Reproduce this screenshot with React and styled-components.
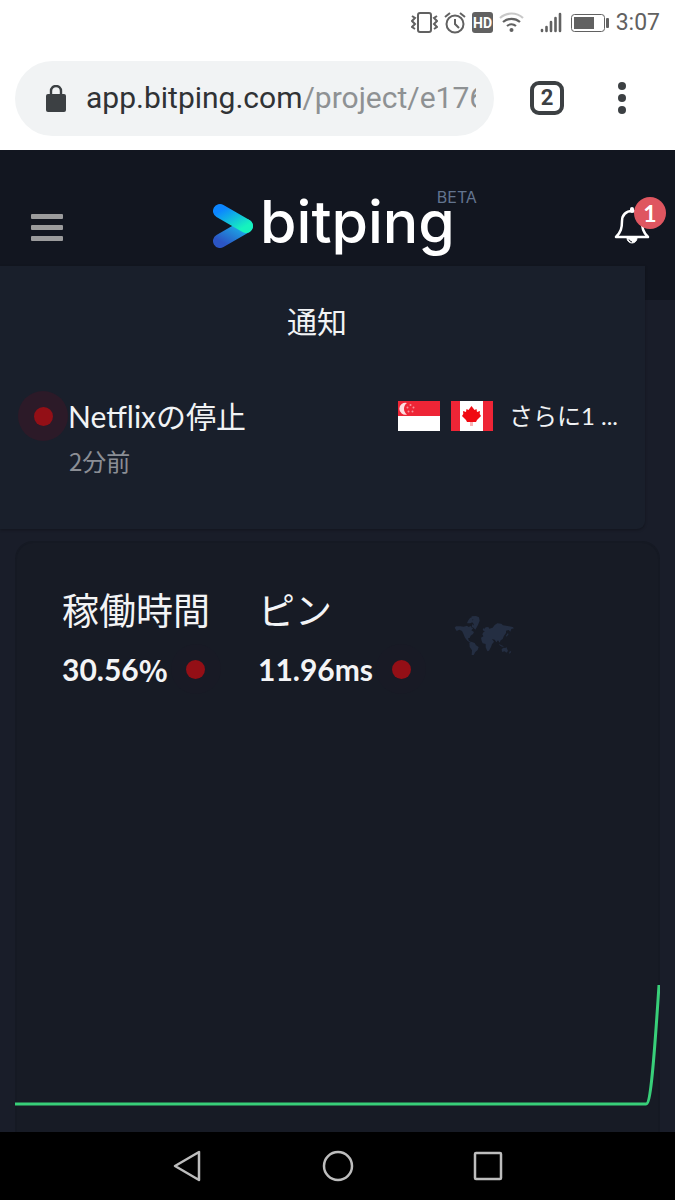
import React from "react";
import styled, { createGlobalStyle } from "styled-components";

const GlobalStyle = createGlobalStyle`
  *, *::before, *::after {
    box-sizing: border-box;
  }

  body {
    margin: 0;
    background: #171b25;
    font-family: Lato, "Noto Sans CJK JP", sans-serif;
  }

  h2, p {
    margin: 0;
    padding: 0;
    font-weight: 400;
  }

  svg {
    display: block;
    flex-shrink: 0;
  }

  button {
    border: 0;
    padding: 0;
    background: none;
    color: inherit;
    font: inherit;
    cursor: pointer;
  }
`;

const Screen = styled.div`
  display: flex;
  flex-direction: column;
  min-height: 100vh;
`;

const StatusBar = styled.div`
  display: flex;
  justify-content: flex-end;
  align-items: center;
  height: 46px;
  padding-right: 15px;
  background: #fff;
  color: #616161;
`;

const StatusIcons = styled.div`
  display: flex;
  align-items: center;
  gap: ${({ $gap }) => $gap}px;
  margin-right: ${({ $space }) => $space}px;
`;

const Clock = styled.time`
  font-family: Roboto, sans-serif;
  font-size: 23px;
  line-height: 24px;
`;

const BrowserBar = styled.div`
  display: flex;
  align-items: center;
  height: 104px;
  padding: 0 37px 0 15px;
  background: #fff;
  color: #3c4043;
`;

const AddressBox = styled.div`
  display: flex;
  flex: 1;
  align-items: center;
  gap: 20px;
  min-width: 0;
  height: 75px;
  padding: 0 18px 0 31px;
  border-radius: 38px;
  background: #f1f3f4;
`;

const Address = styled.span`
  flex: 1;
  min-width: 0;
  overflow: hidden;
  white-space: nowrap;
  color: #303235;
  font-family: Roboto, sans-serif;
  font-size: 30px;
  line-height: 40px;
`;

const AddressPath = styled.span`
  color: #8e9193;
`;

const TabsButton = styled.button`
  width: 34px;
  height: 34px;
  margin: 0 42px 0 36px;
  border: 4px solid #3c4043;
  border-radius: 9px;
  font-family: Roboto, sans-serif;
  font-size: 22px;
  font-weight: 700;
  line-height: 26px;
`;

const Header = styled.header`
  position: relative;
  display: flex;
  align-items: flex-start;
  height: 150px;
  padding: 0 9px 0 31px;
  background: #121620;
`;

const MenuButton = styled.button`
  display: flex;
  flex-direction: column;
  gap: 6px;
  width: 32px;
  margin-top: 64px;
`;

const MenuBar = styled.span`
  width: 100%;
  height: 5px;
  border-radius: 1px;
  background: #9b9b9c;
`;

const Logo = styled.a`
  position: relative;
  display: flex;
  align-items: flex-start;
  margin: 0 auto;
  padding-right: 10px;
  color: #fff;
  text-decoration: none;
`;

const LogoMark = styled.svg`
  margin: 53px 6px 0 0;
`;

const Wordmark = styled.span`
  margin-top: 36px;
  font-family: Inter, sans-serif;
  font-size: 59px;
  font-weight: 500;
  line-height: 72px;
`;

const Beta = styled.sup`
  position: absolute;
  top: 37px;
  right: -12px;
  color: #62748f;
  font-family: Inter, sans-serif;
  font-size: 16px;
  line-height: 20px;
`;

const BellButton = styled.button`
  position: relative;
  width: 52px;
  height: 50px;
  margin-top: 47px;
`;

const BellIcon = styled.svg`
  margin-top: 6px;
`;

const Badge = styled.span`
  position: absolute;
  top: 0;
  right: 0;
  width: 32px;
  height: 32px;
  border-radius: 50%;
  background: #df5660;
  color: #fff;
  font-size: 23px;
  font-weight: 700;
  line-height: 33px;
  text-align: center;
`;

const Notifications = styled.section`
  position: absolute;
  top: 116px;
  left: 0;
  right: 30px;
  z-index: 1;
  height: 263px;
  padding: 33px 27px 0 18px;
  border-radius: 0 0 8px 0;
  background: #191f2b;
  box-shadow: 0 1px 3px rgba(0, 0, 0, 0.3);
  color: #f1f3f5;
`;

const PanelTitle = styled.h2`
  padding-right: 2px;
  font-size: 30px;
  line-height: 44px;
  text-align: center;
`;

const Notice = styled.div`
  display: flex;
  align-items: flex-start;
  margin-top: 48px;
`;

const Halo = styled.span`
  display: grid;
  place-items: center;
  width: 50px;
  height: 50px;
  border-radius: 50%;
  background: ${({ $quiet }) => ($quiet ? "#181a25" : "#2c1a28")};

  &::before {
    content: "";
    width: 19px;
    height: 19px;
    border-radius: 50%;
    background: #930f16;
  }
`;

const NoticeText = styled.div`
  flex: 1;
`;

const NoticeTitle = styled.p`
  font-size: 30px;
  line-height: 50px;
`;

const NoticeTime = styled.p`
  padding-left: 1px;
  color: #8b8e95;
  font-family: "Noto Sans CJK JP", sans-serif;
  font-size: 24px;
  line-height: 40px;
`;

const Regions = styled.div`
  display: flex;
  align-items: center;
  gap: 11px;
  height: 50px;
`;

const More = styled.span`
  padding-left: 5px;
  font-size: 24px;
  line-height: 30px;
  white-space: nowrap;
`;

const Main = styled.main`
  display: flex;
  flex: 1;
  flex-direction: column;
  padding: 241px 15px 0;
  background: #191d29;
`;

const Card = styled.section`
  display: flex;
  flex: 1;
  flex-direction: column;
  border: 2px solid #151923;
  border-bottom: 0;
  border-radius: 18px 18px 0 0;
  background: #171b25;
`;

const Stats = styled.div`
  display: flex;
  align-items: flex-start;
  padding: 40px 45px 0;
  color: #f3f4f6;
`;

const Stat = styled.div`
  width: 196px;
`;

const StatLabel = styled.h2`
  font-size: 37px;
  line-height: 56px;
`;

const StatValue = styled.p`
  display: flex;
  align-items: center;
  height: 60px;
  font-size: 30px;
  font-weight: 700;

  ${Halo} {
    margin-left: 3px;
  }
`;

const Percent = styled.span`
  font-family: "Noto Sans CJK JP", sans-serif;
  line-height: 40px;
`;

const WorldMap = styled.svg`
  margin-top: 32px;
`;

const Chart = styled.svg`
  width: calc(100% + 4px);
  height: 150px;
  margin: auto -2px 0;
`;

const SystemNav = styled.nav`
  display: flex;
  justify-content: center;
  align-items: center;
  gap: 114px;
  height: 68px;
  background: #000;
`;

const stats = [
  { label: "稼働時間", value: "30.56", percent: true },
  { label: "ピン", value: "11.96ms" },
];

const VibrateIcon = () => (
  <svg width="27" height="22" viewBox="0 0 27 22" fill="none" stroke="currentColor" strokeWidth="2">
    <rect x="7" y="1" width="13" height="19" rx="2" />
    <path d="M1 4l3 2-3 3 3 3-3 3 3 2M26 4l-3 2 3 3-3 3 3 3-3 2" />
  </svg>
);

const AlarmIcon = () => (
  <svg width="22" height="22" viewBox="0 0 22 22" fill="none" stroke="currentColor" strokeWidth="2">
    <circle cx="11" cy="12" r="8.5" />
    <path d="M1 5l5-4M21 5l-5-4M11 7v5l4 4" />
  </svg>
);

const HdIcon = () => (
  <svg width="21" height="22" viewBox="0 0 21 22">
    <rect width="21" height="21" rx="3" fill="currentColor" />
    <text x="10.5" y="15.5" textAnchor="middle" fill="#fff" fontFamily="Roboto, sans-serif" fontSize="14" fontWeight="700">
      HD
    </text>
  </svg>
);

const WifiIcon = () => (
  <svg width="25" height="22" viewBox="0 0 25 22" fill="none" stroke="currentColor" strokeWidth="2.2">
    <path d="M1 6a17 17 0 0 1 23 0" opacity="0.35" />
    <path d="M4 10a13 13 0 0 1 17 0M8 14a7 7 0 0 1 9 0" />
    <circle cx="12.5" cy="18" r="2" fill="currentColor" stroke="none" />
  </svg>
);

const SignalIcon = () => (
  <svg width="22" height="22" viewBox="0 0 22 22" stroke="currentColor" strokeWidth="2.6" strokeLinecap="round">
    <path d="M2 18v1M6.5 15v4M11 10v9M15.5 6v13M20 2v17" />
  </svg>
);

const BatteryIcon = () => (
  <svg width="38" height="20" viewBox="0 0 38 20">
    <rect x="0.5" y="1.5" width="33" height="17" rx="3" fill="none" stroke="currentColor" />
    <rect x="3" y="4" width="20" height="12" fill="currentColor" />
    <rect x="35" y="5" width="3" height="10" rx="1" fill="currentColor" />
  </svg>
);

const LockIcon = () => (
  <svg width="20" height="27" viewBox="0 0 20 27">
    <rect y="9" width="20" height="18" rx="2" fill="currentColor" />
    <path d="M5 10V6a5 5 0 0 1 10 0v4" fill="none" stroke="currentColor" strokeWidth="2.4" />
  </svg>
);

const SingaporeFlag = () => (
  <svg width="42" height="30" viewBox="0 0 42 30" role="img" aria-label="シンガポール">
    <path fill="#fff" d="M0 0h42v30H0z" />
    <path fill="#ee2536" d="M0 0h42v15H0z" />
    <path fill="#fff" opacity="0.85" d="M9 2a6 6 0 1 0 0 11.5A7 7 0 0 1 9 2z" />
    <g fill="#fff" opacity="0.5">
      <circle cx="12.5" cy="4" r="1" />
      <circle cx="9.5" cy="6.5" r="1" />
      <circle cx="15.5" cy="6.5" r="1" />
      <circle cx="10.5" cy="10.5" r="1" />
      <circle cx="14.5" cy="10.5" r="1" />
    </g>
  </svg>
);

const CanadaFlag = () => (
  <svg width="42" height="30" viewBox="0 0 42 30" role="img" aria-label="カナダ">
    <path fill="#ee2536" d="M0 0h42v30H0z" />
    <path fill="#fff" d="M9 0h23v30H9z" />
    <path
      fill="#f00a12"
      d="M20.5 5l3 4 2-1 .5 3 3-1-.3 3 1.3 2-4 4-1 2h-9l-1-2-4-4 1.3-2-.3-3 3 1 .5-3 2 1z"
    />
    <path fill="#f00a12" opacity="0.3" d="M19 21h3v4h-3z" />
  </svg>
);

const Map = () => (
  <WorldMap width="62" height="40" viewBox="0 0 186 120" fill="#242e42" aria-hidden="true">
    <path d="M2 38l4-4 13 0 10 1 10-3 5 4 6-3 4 6 4 1-6 6 8 5-3 6-7 5-3 7-5 1 3 8 6 2-2 3-9-6-7-9-5-12-4-8-8-4-8 4z" />
    <path d="M39 25l3-8 6-8 8-4 4 5-6 5 3 6-8 4zM52 4l14-1 9 4 2 10-5 13-8 14-5-5 0-12-6-8 5-6zM55 27l5 6-2 6-5-4z" />
    <path d="M46 83l6-3 10 4 4 7 8 5-3 9-7 6-6 11-5-2 1-14-7-10z" />
    <path d="M81 68l7-4-3-6 3-6 4-2-4-5 7-8 8-1 3 5 10-3 6-8 8-5 12 1 5 5 14 2 15 3 4 4-8 2-3 8-5-5-8 2 0 7-6 8-4 10-6 4-3 7-5-7-5 6-5-8-8-2 6 8-6 8-3 8-6 11-5 2-5-12 0-10-9-2-3-7z" />
    <path d="M143 102l6-4 5 1 3-3 5 12-5 5-5-4-8 2zM136 87l6 4 8 3-6 1-8-5zM156 62l5-7 3 2-6 8zM168 108l4 2-5 6-2-2zM86 44l3-5 3 4-2 5z" />
  </WorldMap>
);

const App = () => (
  <>
    <GlobalStyle />
    <Screen>
      <StatusBar>
        <StatusIcons $gap={6} $space={16}>
          <VibrateIcon />
          <AlarmIcon />
          <HdIcon />
          <WifiIcon />
        </StatusIcons>
        <StatusIcons $gap={9} $space={7}>
          <SignalIcon />
          <BatteryIcon />
        </StatusIcons>
        <Clock>3:07</Clock>
      </StatusBar>

      <BrowserBar>
        <AddressBox>
          <LockIcon />
          <Address>
            app.bitping.com<AddressPath>/project/e176</AddressPath>
          </Address>
        </AddressBox>
        <TabsButton aria-label="タブ">2</TabsButton>
        <button aria-label="メニュー">
          <svg width="32" height="32" viewBox="0 0 32 32" fill="currentColor">
            <circle cx="16" cy="4" r="4" />
            <circle cx="16" cy="16" r="4" />
            <circle cx="16" cy="28" r="4" />
          </svg>
        </button>
      </BrowserBar>

      <Header>
        <MenuButton aria-label="ナビゲーション">
          <MenuBar />
          <MenuBar />
          <MenuBar />
        </MenuButton>
        <Logo href="#">
          <LogoMark width="42" height="46" viewBox="0 0 42 46" fill="none" strokeWidth="14" strokeLinecap="round">
            <defs>
              <linearGradient id="lower" x1="0" y1="1" x2="1" y2="0">
                <stop offset="0" stopColor="#2b55c4" />
                <stop offset="1" stopColor="#18b8ee" />
              </linearGradient>
              <linearGradient id="upper" x1="0" y1="0" x2="1" y2="1">
                <stop offset="0" stopColor="#0c86ff" />
                <stop offset="1" stopColor="#16f3bd" />
              </linearGradient>
            </defs>
            <path d="M8 38L34 23" stroke="url(#lower)" />
            <path d="M8 8L34 23" stroke="url(#upper)" />
          </LogoMark>
          <Wordmark>bitping</Wordmark>
          <Beta>BETA</Beta>
        </Logo>
        <BellButton aria-label="通知">
          <BellIcon width="36" height="42" viewBox="0 0 36 42" fill="none" stroke="#fff" strokeWidth="2.5" strokeLinejoin="round">
            <path d="M2 33c5-5 6-9 6-16 0-6 4-10 10-10s10 4 10 10c0 7 1 11 6 16z" />
            <path d="M18 7V5" strokeWidth="4" strokeLinecap="round" />
            <path d="M13 34a5 5 0 0 0 10 0z" fill="#fff" strokeWidth="1" />
            <path d="M15 35.5a4 4 0 0 0 3 2.5" stroke="#121620" strokeWidth="1" />
          </BellIcon>
          <Badge>1</Badge>
        </BellButton>

        <Notifications>
          <PanelTitle>通知</PanelTitle>
          <Notice>
            <Halo />
            <NoticeText>
              <NoticeTitle>Netflixの停止</NoticeTitle>
              <NoticeTime>2分前</NoticeTime>
            </NoticeText>
            <Regions>
              <SingaporeFlag />
              <CanadaFlag />
              <More>さらに1 ...</More>
            </Regions>
          </Notice>
        </Notifications>
      </Header>

      <Main>
        <Card>
          <Stats>
            {stats.map(({ label, value, percent }) => (
              <Stat key={label}>
                <StatLabel>{label}</StatLabel>
                <StatValue>
                  {value}
                  {percent && <Percent>%</Percent>}
                  <Halo $quiet />
                </StatValue>
              </Stat>
            ))}
            <Map />
          </Stats>
          <Chart viewBox="0 0 645 150" preserveAspectRatio="none" fill="none" aria-hidden="true">
            <path
              d="M0 122H631C635 122 638 96 644 3"
              stroke="#38cf79"
              strokeWidth="3"
              vectorEffect="non-scaling-stroke"
            />
          </Chart>
        </Card>
      </Main>

      <SystemNav>
        <button aria-label="戻る">
          <svg width="36" height="36" viewBox="0 0 36 36" fill="none" stroke="#bdbdbd" strokeWidth="2.5" strokeLinejoin="round">
            <path d="M5 18L29 4V32z" />
          </svg>
        </button>
        <button aria-label="ホーム">
          <svg width="36" height="36" viewBox="0 0 36 36" fill="none" stroke="#bdbdbd" strokeWidth="2.5">
            <circle cx="18" cy="18" r="14" />
          </svg>
        </button>
        <button aria-label="最近のアプリ">
          <svg width="36" height="36" viewBox="0 0 36 36" fill="none" stroke="#bdbdbd" strokeWidth="2.5">
            <rect x="5" y="5" width="26" height="26" rx="1" />
          </svg>
        </button>
      </SystemNav>
    </Screen>
  </>
);

export default App;
